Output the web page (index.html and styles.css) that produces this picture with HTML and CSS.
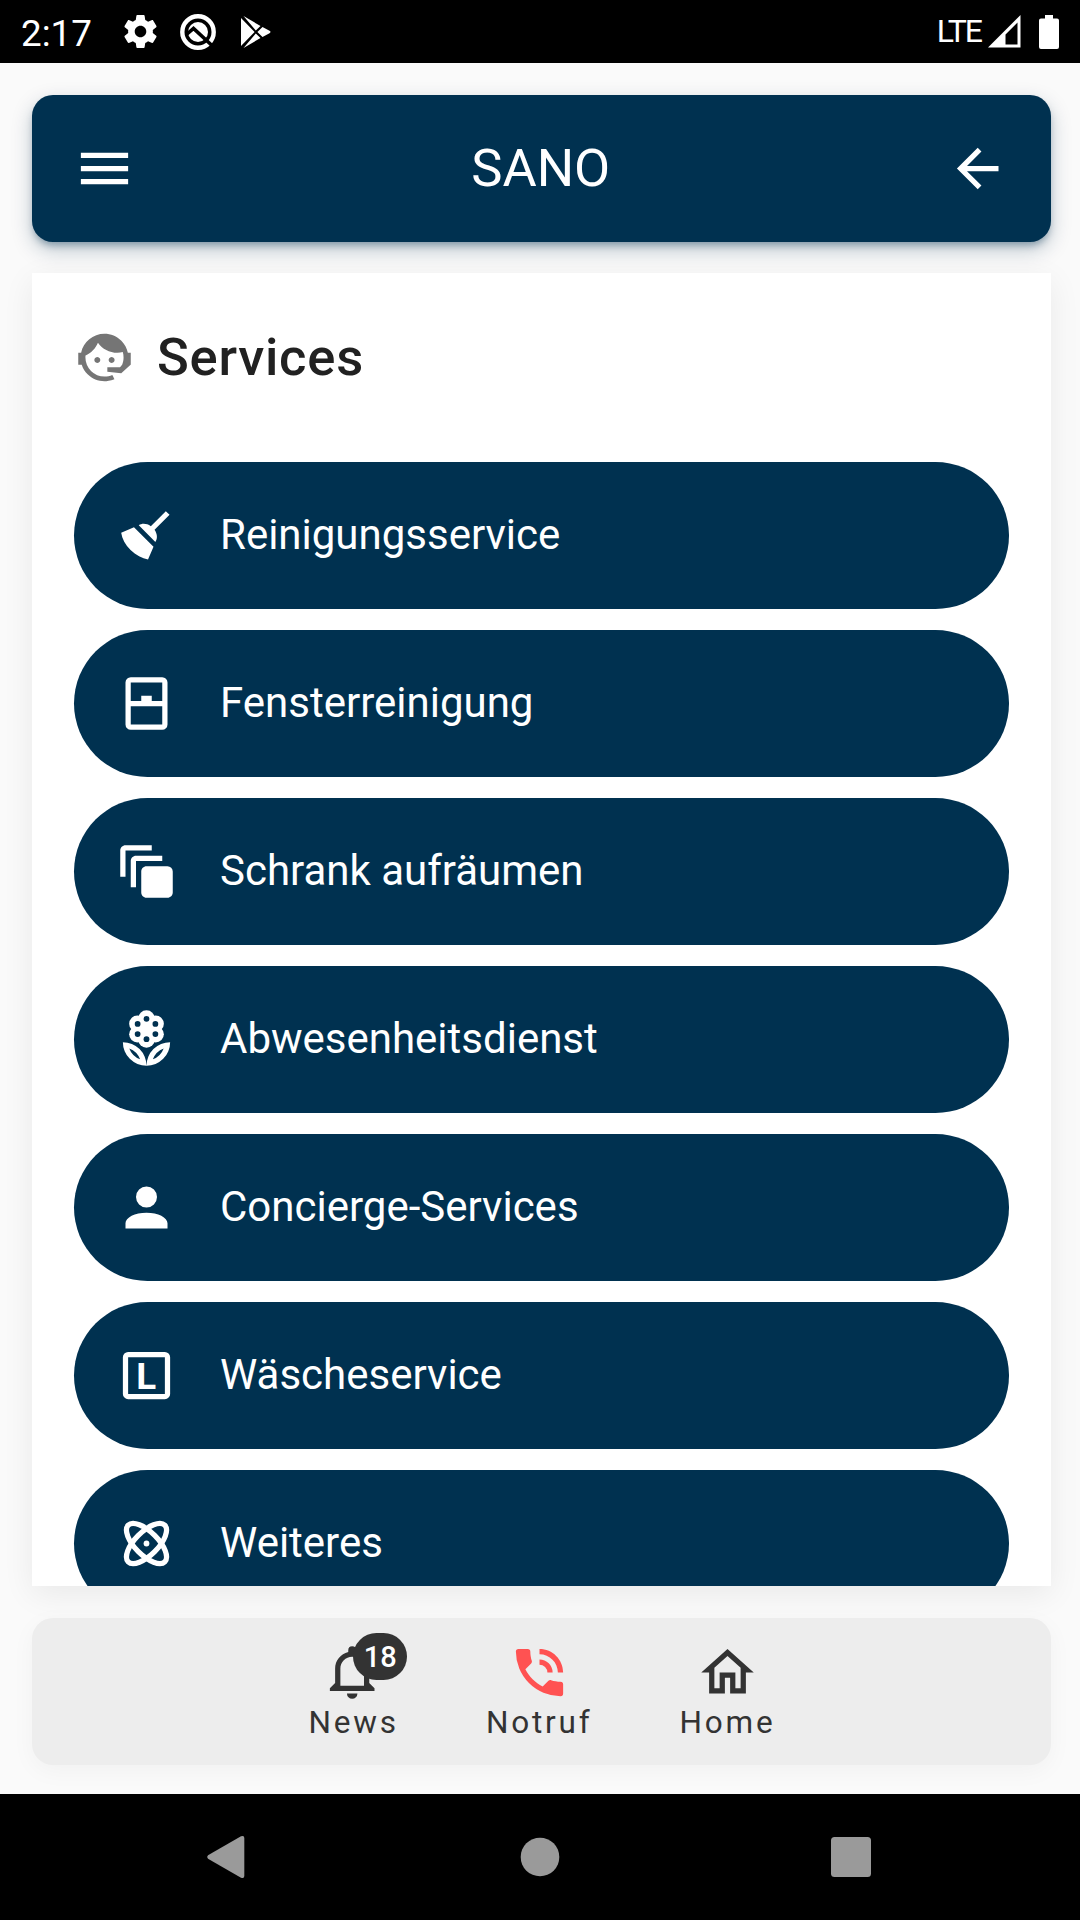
FILE: index.html
```html
<!DOCTYPE html>
<html lang="de">
<head>
<meta charset="utf-8">
<title>SANO – Services</title>
<link rel="stylesheet" href="styles.css">
</head>
<body>
<div class="status-bar">
  <span class="clock">2:17</span>
  <svg class="status-gear" viewBox="2 2 20 20"><path d="M19.43 12.98c.04-.32.07-.64.07-.98s-.03-.66-.07-.98l2.11-1.65c.19-.15.24-.42.12-.64l-2-3.46c-.12-.22-.39-.3-.61-.22l-2.49 1c-.52-.4-1.08-.73-1.69-.98l-.38-2.65C14.46 2.18 14.25 2 14 2h-4c-.25 0-.46.18-.49.42l-.38 2.65c-.61.25-1.17.59-1.69.98l-2.49-1c-.23-.09-.49 0-.61.22l-2 3.46c-.13.22-.07.49.12.64l2.11 1.65c-.04.32-.07.65-.07.98s.03.66.07.98l-2.11 1.65c-.19.15-.24.42-.12.64l2 3.46c.12.22.39.3.61.22l2.49-1c.52.4 1.08.73 1.69.98l.38 2.65c.03.24.24.42.49.42h4c.25 0 .46-.18.49-.42l.38-2.65c.61-.25 1.17-.59 1.69-.98l2.49 1c.23.09.49 0 .61-.22l2-3.46c.12-.22.07-.49-.12-.64l-2.110-1.65zM12 15.500c-1.930 0-3.500-1.570-3.500-3.500s1.570-3.500 3.500-3.500 3.500 1.570 3.500 3.500-1.570 3.500-3.500 3.500z"/></svg>
  <svg class="status-q" viewBox="0 0 36 36"><circle cx="18" cy="18" r="15.7" fill="none" stroke="#fff" stroke-width="4.4"/><circle cx="18" cy="18" r="10"/><path d="M6.500 20.500L13.500 14.500L32 31.500" fill="none" stroke="#000" stroke-width="3.600"/></svg>
  <svg class="status-play" viewBox="0 0 30 32"><path d="M0 2V30L13.600 16ZM2.500 0L14.800 14.600L19.500 10ZM2.500 32L14.800 17.400L19.500 22ZM16.400 16L21.500 11L28.500 14.800Q30.500 16 28.500 17.200L21.500 21Z"/></svg>
  <span class="network">LTE</span>
  <svg class="status-signal" viewBox="0 0 33 33"><path fill-rule="evenodd" d="M0 32.500L32.500 0V32.500ZM17.500 29.500H29.500V7.500L17.500 19.500Z"/></svg>
  <svg class="status-battery" viewBox="0 0 20 34"><path d="M6 0H14V3.500H18Q20 3.500 20 5.500V32Q20 34 18 34H2Q0 34 0 32V5.500Q0 3.500 2 3.500H6Z"/></svg>
</div>

<main class="app">
  <header class="app-bar">
    <svg class="icon" viewBox="0 0 24 24"><path d="M3,6H21V8H3V6M3,11H21V13H3V11M3,16H21V18H3V16Z"/></svg>
    <h1 class="app-title">SANO</h1>
    <svg class="icon" viewBox="0 0 24 24"><path d="M20,11V13H8L13.500,18.500L12.080,19.920L4.160,12L12.080,4.080L13.500,5.500L8,11H20Z"/></svg>
  </header>

  <section class="card">
    <div class="card-head">
      <svg class="icon icon-agent" viewBox="0 0 24 24"><path d="M18.720,14.760C19.070,13.910 19.260,13 19.260,12C19.260,11.280 19.150,10.590 18.960,9.950C18.310,10.100 17.630,10.180 16.920,10.180C13.860,10.180 11.150,8.670 9.500,6.340C8.610,8.500 6.910,10.260 4.770,11.220C4.730,11.470 4.730,11.740 4.730,12A7.270,7.270 0 0,0 12,19.270C13.050,19.270 14.060,19.040 14.970,18.630C15.540,19.720 15.800,20.260 15.780,20.260C14.140,20.810 12.870,21.080 12,21.080C9.580,21.080 7.270,20.130 5.570,18.420C4.530,17.380 3.760,16.110 3.330,14.730H2V10.180H3.090C3.930,6.040 7.600,2.920 12,2.920C14.400,2.920 16.710,3.870 18.420,5.580C19.690,6.840 20.540,8.450 20.890,10.180H22V14.730H21.940L18.380,18L13.080,17.400V15.730H17.910L18.720,14.760M9.270,11.770A1.140,1.140 0 1,1 9.260,11.770ZM14.720,11.770A1.140,1.140 0 1,1 14.710,11.770Z"/></svg>
      <h2 class="card-title">Services</h2>
    </div>
    <nav class="services">
      <a class="service">
        <svg class="icon" viewBox="0 0 24 24"><path d="M19.360,2.720L20.780,4.140L15.060,9.850C16.130,11.390 16.280,13.240 15.380,14.440L9.060,8.120C10.260,7.220 12.110,7.370 13.650,8.440L19.360,2.720M5.930,17.570C3.920,15.560 2.690,13.160 2.350,10.920L7.230,8.830L14.670,16.270L12.580,21.150C10.340,20.810 7.940,19.580 5.930,17.570Z"/></svg>
        <span class="service-label">Reinigungsservice</span>
      </a>
      <a class="service">
        <svg class="icon" viewBox="0 0 24 24"><path d="M6,11H10V9H14V11H18V4H6V11M18,13H6V20H18V13M6,2H18A2,2 0 0,1 20,4V20A2,2 0 0,1 18,22H6A2,2 0 0,1 4,20V4A2,2 0 0,1 6,2Z"/></svg>
        <span class="service-label">Fensterreinigung</span>
      </a>
      <a class="service">
        <svg class="icon" viewBox="0 0 24 24"><path d="M4,2C2.890,2 2,2.890 2,4V14H4V4H14V2H4M8,6C6.890,6 6,6.890 6,8V18H8V8H18V6H8M12,10C10.890,10 10,10.890 10,12V20C10,21.100 10.900,22 12,22H20C21.100,22 22,21.100 22,20V12A2,2 0 0,0 20,10H12Z"/></svg>
        <span class="service-label">Schrank aufräumen</span>
      </a>
      <a class="service">
        <svg class="icon" viewBox="0 0 24 24">
          <path fill-rule="evenodd" d="M12 22A9 9 0 0 0 3 13A9 9 0 0 0 12 22M5.440 15.440A7.030 7.030 0 0 1 9.560 19.560A7.030 7.030 0 0 1 5.440 15.440M12 22A9 9 0 0 0 21 13A9 9 0 0 0 12 22M14.420 19.570A7.030 7.030 0 0 1 18.540 15.450A7.030 7.030 0 0 1 14.420 19.570"/>
          <circle cx="12" cy="8" r="4"/>
          <g><circle cx="12" cy="4" r="3.150"/><circle cx="15.460" cy="6" r="3.150"/><circle cx="15.460" cy="10" r="3.150"/><circle cx="12" cy="12" r="3.150"/><circle cx="8.540" cy="10" r="3.150"/><circle cx="8.540" cy="6" r="3.150"/></g>
          <g class="petal-holes"><circle cx="12" cy="4.100" r="1.100"/><circle cx="15.380" cy="6.050" r="1.100"/><circle cx="15.380" cy="9.950" r="1.100"/><circle cx="12" cy="11.900" r="1.100"/><circle cx="8.620" cy="9.950" r="1.100"/><circle cx="8.620" cy="6.050" r="1.100"/></g>
        </svg>
        <span class="service-label">Abwesenheitsdienst</span>
      </a>
      <a class="service">
        <svg class="icon" viewBox="0 0 24 24"><path d="M12,4A4,4 0 0,1 16,8A4,4 0 0,1 12,12A4,4 0 0,1 8,8A4,4 0 0,1 12,4M12,14C16.420,14 20,15.790 20,18V20H4V18C4,15.790 7.580,14 12,14Z"/></svg>
        <span class="service-label">Concierge-Services</span>
      </a>
      <a class="service">
        <svg class="icon" viewBox="0 0 24 24"><rect class="line" x="4" y="4" width="16" height="16" rx="1"/><text class="box-letter" x="8.100" y="17">L</text></svg>
        <span class="service-label">Wäscheservice</span>
      </a>
      <a class="service">
        <svg class="icon" viewBox="0 0 24 24"><g class="line"><ellipse cx="12" cy="12" rx="9.850" ry="4.400" transform="rotate(45 12 12)"/><ellipse cx="12" cy="12" rx="9.850" ry="4.400" transform="rotate(-45 12 12)"/></g><circle cx="12" cy="12" r="1.100"/></svg>
        <span class="service-label">Weiteres</span>
      </a>
    </nav>
  </section>

  <footer class="tabs">
    <a class="tab">
      <span class="tab-icon">
        <svg class="icon" viewBox="0 0 24 24"><path d="M16,17H7V10.500C7,8 9,6 11.500,6C14,6 16,8 16,10.500M18,16V10.500C18,7.430 15.860,4.860 13,4.180V3.500A1.500,1.500 0 0,0 11.500,2A1.500,1.500 0 0,0 10,3.500V4.180C7.130,4.860 5,7.430 5,10.500V16L3,18V19H20V18M11.500,22A2,2 0 0,0 13.500,20H9.500A2,2 0 0,0 11.500,22Z"/></svg>
        <span class="badge">18</span>
      </span>
      <span class="tab-label">News</span>
    </a>
    <a class="tab">
      <svg class="icon icon-alert" viewBox="0 0 24 24"><path d="M15,12H17A5,5 0 0,0 12,7V9A3,3 0 0,1 15,12M19,12H21C21,7 16.970,3 12,3V5C15.860,5 19,8.130 19,12M20,15.500C18.750,15.500 17.550,15.300 16.430,14.930C16.080,14.820 15.690,14.900 15.410,15.180L13.210,17.380C10.380,15.940 8.060,13.620 6.620,10.790L8.820,8.590C9.100,8.310 9.180,7.920 9.070,7.570C8.700,6.450 8.500,5.250 8.500,4A1,1 0 0,0 7.500,3H4A1,1 0 0,0 3,4A17,17 0 0,0 20,21A1,1 0 0,0 21,20V16.500A1,1 0 0,0 20,15.500Z"/></svg>
      <span class="tab-label">Notruf</span>
    </a>
    <a class="tab">
      <svg class="icon" viewBox="0 0 24 24"><path d="M12,5.690L17,10.190V18H15V12H9V18H7V10.190L12,5.690M12,3L2,12H5V20H11V14H13V20H19V12H22L12,3Z"/></svg>
      <span class="tab-label">Home</span>
    </a>
  </footer>
</main>

<div class="system-nav">
  <svg viewBox="0 0 44 44"><path d="M5 20.200L38 1.300Q41.300 0 41.300 3V41Q41.300 44 38 42.700L5 23.800Q3.200 22 5 20.200Z"/></svg>
  <svg class="system-home" viewBox="0 0 44 44"><circle cx="22" cy="22" r="19.300"/></svg>
  <svg viewBox="0 0 44 44"><rect x="2" y="2" width="40" height="40" rx="3.500"/></svg>
</div>
</body>
</html>
```
FILE: styles.css
```css
* {
  box-sizing: border-box;
}

body {
  margin: 0;
  width: 1080px;
  height: 1920px;
  display: flex;
  flex-direction: column;
  overflow: hidden;
  background: #fafafa;
  color: #212121;
  font-family: Roboto, "Noto Sans", sans-serif;
}

svg {
  display: block;
  flex: none;
  fill: currentColor;
}

.icon {
  width: 63px;
  height: 63px;
}

.line {
  fill: none;
  stroke: currentColor;
  stroke-width: 2;
}

.status-bar {
  height: 63px;
  flex: none;
  display: flex;
  align-items: center;
  padding: 0 21px;
  background: #000;
  color: #fff;
}

.clock {
  width: 102.5px;
  font-size: 36.75px;
  line-height: 43px;
  padding-top: 3px;
}

.status-gear {
  width: 33px;
  height: 33px;
  margin-right: 23px;
}

.status-q {
  width: 36px;
  height: 36px;
  margin-right: 25.5px;
}

.status-play {
  width: 30px;
  height: 32px;
}

.network {
  margin-left: auto;
  margin-right: 7px;
  padding-bottom: 2px;
  font-size: 32px;
  line-height: 38px;
  letter-spacing: -2px;
}

.status-signal {
  width: 33px;
  height: 33px;
  margin-right: 18px;
}

.status-battery {
  width: 20px;
  height: 34px;
}

.app {
  flex: 1;
  min-height: 0;
  display: flex;
  flex-direction: column;
  padding: 32px 29px 29px 32px;
}

.app-bar {
  height: 147px;
  flex: none;
  display: flex;
  align-items: center;
  justify-content: space-between;
  padding: 0 42.5px 0 41px;
  border-radius: 21px;
  background: #003150;
  color: #fff;
  box-shadow: 0 5px 7px -2px rgba(0, 49, 80, 0.35), 0 8px 20px rgba(0, 49, 80, 0.25);
}

.app-title {
  margin: 0;
  padding-bottom: 2px;
  font-size: 52.5px;
  font-weight: 400;
  line-height: 62px;
}

.card {
  height: 1313px;
  flex: none;
  margin-top: 31px;
  padding: 0 42px;
  overflow: hidden;
  background: #fff;
  box-shadow: 0 8px 30px rgba(0, 0, 0, 0.07);
}

.card-head {
  height: 189px;
  display: flex;
  align-items: center;
  margin-left: -1px;
  padding-bottom: 20px;
  gap: 21px;
}

.icon-agent {
  color: #757575;
}

.card-title {
  margin: 0;
  padding-bottom: 2px;
  font-size: 52.5px;
  font-weight: 500;
  line-height: 62px;
  letter-spacing: 0.75px;
}

.services {
  display: flex;
  flex-direction: column;
  gap: 21px;
}

.service {
  height: 147px;
  flex: none;
  display: flex;
  align-items: center;
  gap: 42px;
  padding: 0 42px 0 41px;
  border-radius: 74px;
  background: #003150;
  color: #fff;
  font-size: 42px;
  line-height: 50px;
}

.service-label {
  padding-bottom: 2px;
}

.petal-holes {
  fill: #003150;
}

.box-letter {
  font-size: 14px;
  font-weight: 700;
}

.tabs {
  height: 147px;
  flex: none;
  display: flex;
  justify-content: center;
  gap: 87px;
  margin-top: 32px;
  padding-top: 23px;
  padding-left: 1px;
  border-radius: 21px;
  background: #ededed;
  color: #333;
  box-shadow: 0 6px 24px rgba(0, 0, 0, 0.04);
}

.tab {
  display: flex;
  flex-direction: column;
  align-items: center;
}

.tab-icon {
  position: relative;
}

.tab-label {
  margin-top: 1px;
  font-size: 31.5px;
  line-height: 36px;
  letter-spacing: 2.8px;
}

.badge {
  position: absolute;
  left: 31px;
  top: -8px;
  width: 54px;
  height: 47px;
  border-radius: 24px;
  background: #333;
  color: #fff;
  font-size: 29px;
  font-weight: 500;
  line-height: 48px;
  text-align: center;
}

.icon-alert {
  color: #ff5252;
}

.system-nav {
  height: 126px;
  flex: none;
  display: flex;
  align-items: center;
  justify-content: space-between;
  padding: 0 207px 0 203px;
  background: #000;
  color: #9a9a9a;
}

.system-nav svg {
  width: 44px;
  height: 44px;
}

.system-nav .system-home {
  margin-left: 4px;
}
```
